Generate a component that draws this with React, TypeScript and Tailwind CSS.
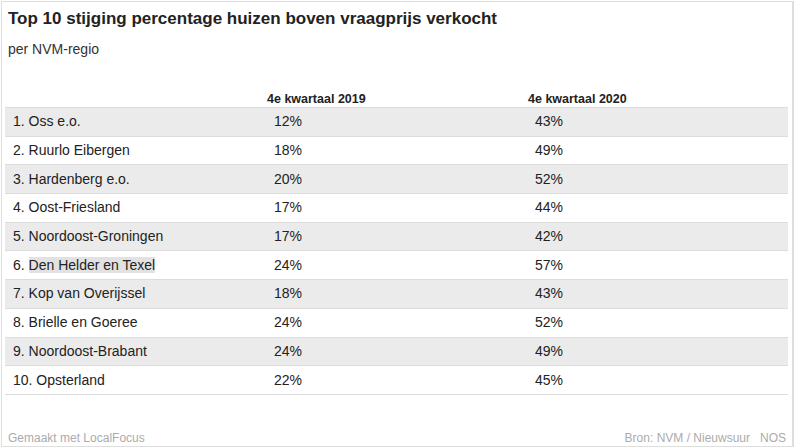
import React from "react";

const rows: [string, string, string][] = [
  ["1. Oss e.o.", "12%", "43%"],
  ["2. Ruurlo Eibergen", "18%", "49%"],
  ["3. Hardenberg e.o.", "20%", "52%"],
  ["4. Oost-Friesland", "17%", "44%"],
  ["5. Noordoost-Groningen", "17%", "42%"],
  ["6. Den Helder en Texel", "24%", "57%"],
  ["7. Kop van Overijssel", "18%", "43%"],
  ["8. Brielle en Goeree", "24%", "52%"],
  ["9. Noordoost-Brabant", "24%", "49%"],
  ["10. Opsterland", "22%", "45%"],
];

export default function App() {
  return (
    <div className="w-[800px] h-[448px] bg-white" style={{ fontFamily: '"Liberation Sans", Arial, sans-serif' }}>
      <div className="ml-[1px] mt-[1px] w-[793px] h-[446px] border border-r-2 border-[#dedede] flex flex-col">
        <div className="pl-[6px] pt-[6px] text-[17px] font-bold text-[#222] leading-[22px]">
          Top 10 stijging percentage huizen boven vraagprijs verkocht
        </div>
        <div className="pl-[6px] pt-[11px] text-[14px] text-[#333] leading-[16px]">per NVM-regio</div>
        <div className="mx-[3px] mt-[35px] w-[783px]">
          <div className="grid grid-cols-3 h-[16px] border-b border-[#dcdcdc] text-[12.5px] font-bold text-[#222] leading-[14px]">
            <div></div>
            <div className="pl-[1px]">4e kwartaal 2019</div>
            <div className="pl-[1px]">4e kwartaal 2020</div>
          </div>
          {rows.map((r, i) => (
            <div
              key={i}
              className={`grid grid-cols-3 h-[28.7px] items-center border-b border-[#dcdcdc] text-[14px] text-[#222] ${i % 2 === 0 ? "bg-[#ebebeb]" : "bg-white"}`}
            >
              <div className="pl-[8px]">
                {i === 5 ? (
                  <span>
                    6. <span className="bg-[#e2e2e2]">Den Helder en Texel</span>
                  </span>
                ) : (
                  r[0]
                )}
              </div>
              <div className="pl-[8px]">{r[1]}</div>
              <div className="pl-[8px]">{r[2]}</div>
            </div>
          ))}
        </div>
        <div className="flex-1" />
        <div className="flex justify-between px-[6px] pb-[1px] text-[12px] text-[#ababab] leading-[14px]">
          <span>Gemaakt met LocalFocus</span>
          <span className="flex gap-[10px]">
            <span>Bron: NVM / Nieuwsuur</span>
            <span>NOS</span>
          </span>
        </div>
      </div>
    </div>
  );
}
